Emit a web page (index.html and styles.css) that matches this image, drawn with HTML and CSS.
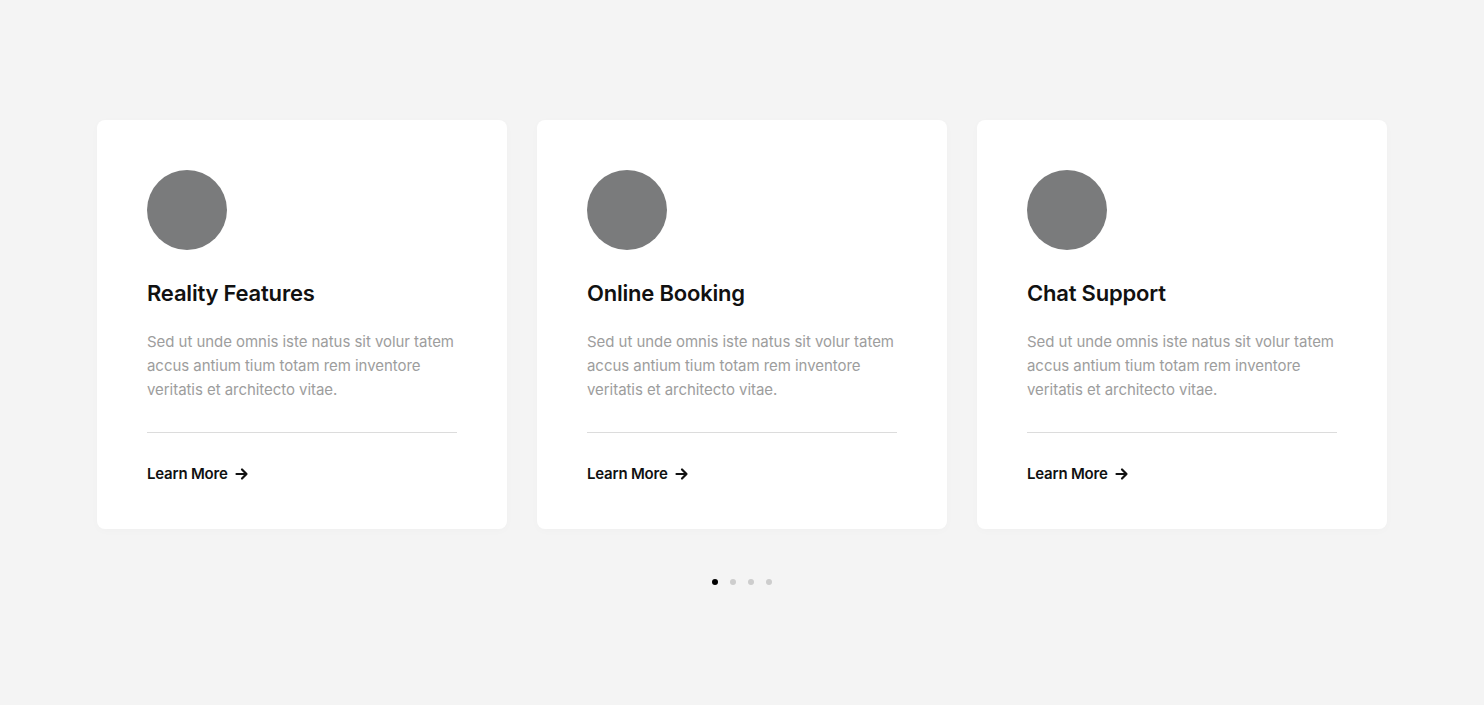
FILE: index.html
```html
<!DOCTYPE html>
<html lang="en">
<head>
<meta charset="utf-8">
<title>Features</title>
<link rel="stylesheet" href="styles.css">
</head>
<body>
<section class="features">
  <div class="cards">
    <article class="card">
      <div class="icon"></div>
      <h3 class="title">Reality Features</h3>
      <p class="text">Sed ut unde omnis iste natus sit volur tatem accus antium tium totam rem inventore veritatis et architecto vitae.</p>
      <hr class="divider">
      <a class="more" href="#">Learn More <svg class="arrow" viewBox="0 0 14 14" width="14" height="14"><path d="M1.5 7h10M7 2.5L11.5 7 7 11.5" fill="none" stroke="currentColor" stroke-width="2.2" stroke-linecap="round" stroke-linejoin="round"/></svg></a>
    </article>
    <article class="card">
      <div class="icon"></div>
      <h3 class="title">Online Booking</h3>
      <p class="text">Sed ut unde omnis iste natus sit volur tatem accus antium tium totam rem inventore veritatis et architecto vitae.</p>
      <hr class="divider">
      <a class="more" href="#">Learn More <svg class="arrow" viewBox="0 0 14 14" width="14" height="14"><path d="M1.5 7h10M7 2.5L11.5 7 7 11.5" fill="none" stroke="currentColor" stroke-width="2.2" stroke-linecap="round" stroke-linejoin="round"/></svg></a>
    </article>
    <article class="card">
      <div class="icon"></div>
      <h3 class="title">Chat Support</h3>
      <p class="text">Sed ut unde omnis iste natus sit volur tatem accus antium tium totam rem inventore veritatis et architecto vitae.</p>
      <hr class="divider">
      <a class="more" href="#">Learn More <svg class="arrow" viewBox="0 0 14 14" width="14" height="14"><path d="M1.5 7h10M7 2.5L11.5 7 7 11.5" fill="none" stroke="currentColor" stroke-width="2.2" stroke-linecap="round" stroke-linejoin="round"/></svg></a>
    </article>
  </div>
  <div class="dots">
    <span class="dot active"></span>
    <span class="dot"></span>
    <span class="dot"></span>
    <span class="dot"></span>
  </div>
</section>
</body>
</html>
```
FILE: styles.css
```css
* { box-sizing: border-box; }
html, body {
  margin: 0;
  padding: 0;
  background: #f4f4f4;
  font-family: Inter, "Noto Sans", sans-serif;
}
.features {
  padding-top: 120px;
  display: flex;
  flex-direction: column;
  align-items: center;
}
.cards {
  display: flex;
  gap: 30px;
}
.card {
  width: 410px;
  height: 409px;
  background: #fff;
  border-radius: 8px;
  padding: 50px 50px 0;
  box-shadow: 0 2px 10px rgba(0,0,0,0.02);
}
.icon {
  width: 80px;
  height: 80px;
  border-radius: 50%;
  background: #7a7b7c;
}
.title {
  margin: 28px 0 0;
  font-size: 22px;
  line-height: 30px;
  font-weight: 600;
  color: #111;
  letter-spacing: -0.2px;
}
.text {
  margin: 22px 0 0;
  font-size: 15px;
  line-height: 24px;
  color: #9d9d9d;
  letter-spacing: -0.05px;
}
.divider {
  margin: 30px 0 0;
  border: 0;
  border-top: 1px solid #dcdcdc;
  height: 0;
}
.more {
  margin-top: 29px;
  display: inline-flex;
  align-items: center;
  gap: 7px;
  font-size: 15px;
  line-height: 24px;
  font-weight: 600;
  color: #111;
  text-decoration: none;
  letter-spacing: -0.2px;
}
.arrow { display: block; }
.dots {
  margin-top: 50px;
  display: flex;
  gap: 12px;
}
.dot {
  width: 6px;
  height: 6px;
  border-radius: 50%;
  background: #cdcdcd;
}
.dot.active { background: #000; }
```
